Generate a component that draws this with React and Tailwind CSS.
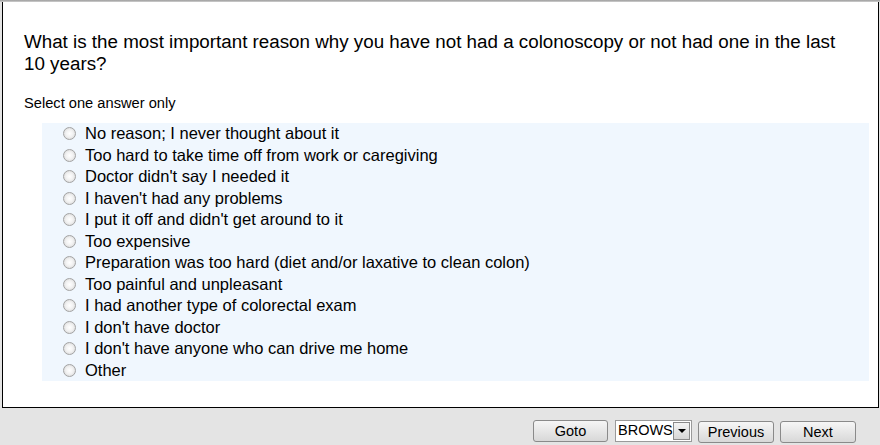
const options = [
  "No reason; I never thought about it",
  "Too hard to take time off from work or caregiving",
  "Doctor didn't say I needed it",
  "I haven't had any problems",
  "I put it off and didn't get around to it",
  "Too expensive",
  "Preparation was too hard (diet and/or laxative to clean colon)",
  "Too painful and unpleasant",
  "I had another type of colorectal exam",
  "I don't have doctor",
  "I don't have anyone who can drive me home",
  "Other"
];

function Radio() {
  return (
    <span className="inline-block h-[13px] w-[13px] shrink-0 rounded-full border border-[#a3a3a3] bg-[radial-gradient(circle_at_50%_50%,#ffffff_0%,#f2f2f2_45%,#cfcfcf_100%)]" />
  );
}

function Btn({ children, w = "w-[76px]" }) {
  return (
    <button className={`h-[22px] ${w} rounded-[3px] border border-[#8a8a8a] bg-gradient-to-b from-[#f6f6f6] to-[#d8d8d8] text-[14.5px] leading-none text-black`}>
      {children}
    </button>
  );
}

export default function App() {
  return (
    <div className="h-[445px] w-[880px] bg-[#e4e4e4] font-['Liberation_Sans',Arial,sans-serif] text-black">
      <div className="h-[2px] bg-gradient-to-b from-[#9c9c9c] to-[#d0d0d0]" />
      <div className="ml-[2px] mr-[1px] h-[406px] border-x border-b border-black bg-white pt-[29px]">
        <h1 className="pl-[21px] pr-[30px] text-[18.8px] leading-[22px]">
          What is the most important reason why you have not had a colonoscopy or not had one in the last 10 years?
        </h1>
        <p className="mt-[20px] pl-[21px] text-[14.67px] leading-[16px]">Select one answer only</p>
        <div className="ml-[39px] mr-[9px] mt-[12px] bg-[#f0f7fe] pl-[21px]">
          {options.map((o) => (
            <label key={o} className="flex h-[21.5px] items-center gap-[9px] text-[16.5px]">
              <Radio />
              <span>{o}</span>
            </label>
          ))}
        </div>
      </div>
      <div className="flex justify-end pr-[24px] pt-[12px]">
        <Btn w="w-[75px]">Goto</Btn>
        <div className="ml-[7px] flex h-[22px] w-[77px] items-center border border-[#9a9a9a] bg-white pl-[2px] text-[14.5px]">
          <span className="flex-1">BROWS</span>
          <span className="mr-[1px] flex h-[18px] w-[17px] items-center justify-center border border-[#8a8a8a] bg-gradient-to-b from-[#f4f4f4] to-[#d6d6d6]">
            <span className="h-0 w-0 border-x-[4px] border-t-[4px] border-x-transparent border-t-black" />
          </span>
        </div>
        <div className="ml-[6px]">
          <Btn>Previous</Btn>
        </div>
        <div className="ml-[6px]">
          <Btn>Next</Btn>
        </div>
      </div>
    </div>
  );
}
